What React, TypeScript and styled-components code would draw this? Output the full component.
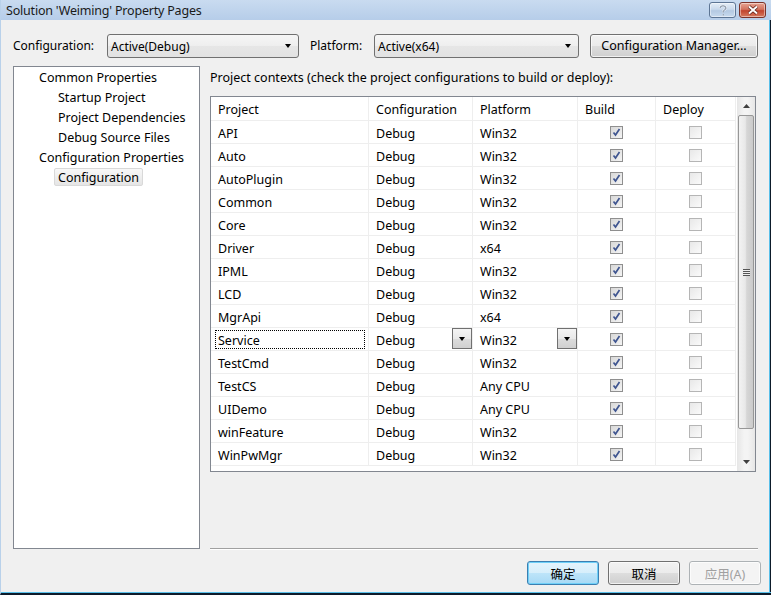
import React from "react";
import styled, { createGlobalStyle } from "styled-components";

const GlobalStyle = createGlobalStyle`
  html, body {
    margin: 0;
    padding: 0;
    background: #f0f0f0;
  }
  body {
    font-family: "Noto Sans", "Noto Sans CJK SC", sans-serif;
    font-size: 12px;
    color: #000;
  }
`;

const ROWS: [string, string, string][] = [
  ["API", "Debug", "Win32"],
  ["Auto", "Debug", "Win32"],
  ["AutoPlugin", "Debug", "Win32"],
  ["Common", "Debug", "Win32"],
  ["Core", "Debug", "Win32"],
  ["Driver", "Debug", "x64"],
  ["IPML", "Debug", "Win32"],
  ["LCD", "Debug", "Win32"],
  ["MgrApi", "Debug", "x64"],
  ["Service", "Debug", "Win32"],
  ["TestCmd", "Debug", "Win32"],
  ["TestCS", "Debug", "Any CPU"],
  ["UIDemo", "Debug", "Any CPU"],
  ["winFeature", "Debug", "Win32"],
  ["WinPwMgr", "Debug", "Win32"],
];

const TREE = [
  { label: "Common Properties", level: 0 },
  { label: "Startup Project", level: 1 },
  { label: "Project Dependencies", level: 1 },
  { label: "Debug Source Files", level: 1 },
  { label: "Configuration Properties", level: 0 },
  { label: "Configuration", level: 1, selected: true },
];

const COLS = "158px 104px 105px 78px 80px";

const Window = styled.div`
  width: 771px;
  height: 595px;
  box-sizing: border-box;
  display: flex;
  flex-direction: column;
  background: #f0f0f0;
  border-left: 1px solid #b9d1ea;
  border-bottom: 2px solid #0d1b2a;
  box-shadow: inset 0 -1px 0 #59c0ea, inset -1px 0 0 #0d1b2a, inset -2px 0 0 #59c0ea;
  overflow: hidden;
`;

const TitleBar = styled.div`
  height: 20px;
  flex: none;
  display: flex;
  align-items: center;
  padding: 0 5px 0 5px;
  background: linear-gradient(#c9dbf0, #b6cde9);
`;

const Title = styled.div`
  flex: 1;
  font-size: 12.5px;
  color: #1a1a1a;
  letter-spacing: -0.2px;
`;

const CaptionButton = styled.div<{ $close?: boolean }>`
  width: 27px;
  height: 16px;
  margin-left: 3px;
  box-sizing: border-box;
  border: 1px solid ${(p) => (p.$close ? "#7b3229" : "#5d7594")};
  border-radius: 3px;
  display: flex;
  align-items: center;
  justify-content: center;
  background: ${(p) =>
    p.$close
      ? "linear-gradient(#e8a493 0%, #d2735f 45%, #c1442e 55%, #d67a5f 100%)"
      : "linear-gradient(#e4edf7 0%, #c9d9ec 45%, #b4c9e2 55%, #c8daee 100%)"};
  box-shadow: inset 0 0 0 1px rgba(255, 255, 255, 0.45);
`;

const Client = styled.div`
  flex: 1;
  display: flex;
  flex-direction: column;
  padding: 13px 12px 0 12px;
  min-height: 0;
`;

const ConfigRow = styled.div`
  display: flex;
  align-items: center;
  height: 25px;
`;

const Label = styled.span<{ $w: number }>`
  width: ${(p) => p.$w}px;
  flex: none;
`;

const Combo = styled.div<{ $w: number }>`
  width: ${(p) => p.$w}px;
  height: 24px;
  flex: none;
  box-sizing: border-box;
  border: 1px solid #707070;
  border-radius: 3px;
  background: linear-gradient(#f6f6f6 0%, #eeeeee 50%, #e6e6e6 51%, #e2e2e2 100%);
  display: flex;
  align-items: center;
  padding: 0 7px 0 3px;
  margin-top: 1px;
`;

const ComboText = styled.span`
  flex: 1;
`;

const Arrow = styled.span`
  width: 0;
  height: 0;
  border-left: 3.5px solid transparent;
  border-right: 3.5px solid transparent;
  border-top: 4px solid #000;
`;

const Button = styled.div<{ $w: number; $default?: boolean; $disabled?: boolean }>`
  width: ${(p) => p.$w}px;
  height: 24px;
  flex: none;
  box-sizing: border-box;
  border: 1px solid
    ${(p) => (p.$default ? "#3c7fb1" : p.$disabled ? "#adb2b5" : "#707070")};
  border-radius: 3px;
  display: flex;
  align-items: center;
  justify-content: center;
  font-size: 12.5px;
  color: ${(p) => (p.$disabled ? "#a0a0a0" : "#000")};
  background: ${(p) =>
    p.$default
      ? "linear-gradient(#e5f4fc 0%, #d6eefb 50%, #bde4f9 51%, #a7d9f5 100%)"
      : p.$disabled
        ? "#f4f4f4"
        : "linear-gradient(#f2f2f2 0%, #ebebeb 50%, #dddddd 51%, #cfcfcf 100%)"};
  box-shadow: ${(p) =>
    p.$default ? "inset 0 0 0 1px #6fd0f8" : "inset 0 0 0 1px rgba(255,255,255,0.7)"};
`;

const Body = styled.div`
  flex: none;
  display: flex;
  margin-top: 8px;
  gap: 10px;
`;

const TreePanel = styled.div`
  width: 187px;
  height: 483px;
  flex: none;
  box-sizing: border-box;
  border: 1px solid #828790;
  background: #fff;
`;

const TreeItem = styled.div<{ $level: number; $selected?: boolean }>`
  height: 20px;
  display: flex;
  align-items: center;
  padding-left: ${(p) => (p.$level ? 44 : 25)}px;
  font-size: 12.5px;
  span {
    padding: 0 3px;
    height: 18px;
    line-height: 17px;
    margin-left: -4px;
    box-sizing: border-box;
    border: 1px solid ${(p) => (p.$selected ? "#d9d9d9" : "transparent")};
    border-radius: 2px;
    background: ${(p) =>
      p.$selected ? "linear-gradient(#f8f8f8, #e5e5e5)" : "transparent"};
  }
`;

const RightCol = styled.div`
  flex: 1;
  display: flex;
  flex-direction: column;
  height: 484px;
`;

const Caption = styled.div`
  height: 24px;
  line-height: 24px;
  margin-bottom: 6px;
  font-size: 12.5px;
`;

const GridBox = styled.div`
  width: 546px;
  height: 376px;
  box-sizing: border-box;
  border: 1px solid #828790;
  background: #fff;
  display: flex;
`;

const Table = styled.div`
  flex: none;
  display: flex;
  flex-direction: column;
`;

const Row = styled.div<{ $header?: boolean }>`
  display: grid;
  grid-template-columns: ${COLS};
  height: ${(p) => (p.$header ? 24 : 23)}px;
`;

const Cell = styled.div<{ $center?: boolean; $header?: boolean }>`
  position: relative;
  box-sizing: border-box;
  border-right: 1px solid #eeeeee;
  border-bottom: 1px solid #eeeeee;
  display: flex;
  align-items: center;
  justify-content: ${(p) => (p.$center ? "center" : "flex-start")};
  padding-left: ${(p) => (p.$center ? 0 : 7)}px;
  padding-top: ${(p) => (p.$header ? 1 : 2)}px;
  font-size: 12.5px;
  white-space: nowrap;
`;

const FocusBox = styled.span`
  position: absolute;
  left: 4px;
  top: 2px;
  right: 3px;
  bottom: 1px;
  border: 1px dotted #000;
  pointer-events: none;
`;

const DropButton = styled.span`
  position: absolute;
  right: 0;
  top: 0;
  width: 20px;
  height: 21px;
  box-sizing: border-box;
  border: 1px solid #707070;
  background: linear-gradient(#f4f4f4 0%, #e9e9e9 50%, #dcdcdc 51%, #d0d0d0 100%);
  display: flex;
  align-items: center;
  justify-content: center;
`;

const Check = styled.span<{ $checked?: boolean }>`
  width: 13px;
  height: 13px;
  margin-top: -1px;
  box-sizing: border-box;
  border: 1px solid ${(p) => (p.$checked ? "#8f8f8f" : "#b5b5b5")};
  background: ${(p) =>
    p.$checked
      ? "linear-gradient(135deg, #d8d8d8, #f4f4f4)"
      : "linear-gradient(135deg, #e8e8e8, #fafafa)"};
  display: flex;
  align-items: center;
  justify-content: center;
`;

const ScrollBar = styled.div`
  width: 18px;
  flex: none;
  margin-left: 1px;
  display: flex;
  flex-direction: column;
  background: linear-gradient(90deg, #e6e6e6, #f4f4f4 40%, #f4f4f4 60%, #e6e6e6);
`;

const ScrollArrow = styled.div`
  height: 18px;
  flex: none;
  display: flex;
  align-items: center;
  justify-content: center;
`;

const Thumb = styled.div`
  height: 314px;
  margin: 0 1px;
  box-sizing: border-box;
  border: 1px solid #979797;
  border-radius: 2px;
  background: linear-gradient(90deg, #f3f3f3, #e8e8e8 45%, #d6d6d6 55%, #cbcbcb);
  display: flex;
  align-items: center;
  justify-content: center;
`;

const Grip = styled.span`
  width: 7px;
  height: 7px;
  background: repeating-linear-gradient(
    #555 0,
    #555 1px,
    #eee 1px,
    #eee 2px
  );
`;

const Spacer = styled.div`
  flex: 1;
`;

const Separator = styled.div`
  height: 1px;
  width: 548px;
  background: #a0a0a0;
  border-bottom: 1px solid #fff;
`;

const Footer = styled.div`
  display: flex;
  justify-content: flex-end;
  gap: 9px;
  padding: 11px 0 0 0;
  margin-right: -2px;
`;

const CheckMark = () => (
  <svg width="9" height="9" viewBox="0 0 9 9">
    <path d="M1.5 4.5 L3.5 7 L7.5 1" fill="none" stroke="#3f5590" strokeWidth="1.7" />
  </svg>
);

const UpArrow = ({ down }: { down?: boolean }) => (
  <svg width="7" height="4" viewBox="0 0 7 4">
    <path d={down ? "M0 0 L7 0 L3.5 4 Z" : "M0 4 L7 4 L3.5 0 Z"} fill="#404040" />
  </svg>
);

const App = () => {
  return (
    <>
      <GlobalStyle />
      <Window>
        <TitleBar>
          <Title>Solution 'Weiming' Property Pages</Title>
          <CaptionButton>
            <svg width="8" height="11" viewBox="0 0 8 11">
              <path
                d="M1 3 Q1 0.8 4 0.8 Q7 0.8 7 3 Q7 4.6 4.8 5.4 L4.2 6 L4.2 7.5 M4.2 9 L4.2 10.5"
                fill="none"
                stroke="#fff"
                strokeWidth="1.7"
              />
              <path
                d="M1 3 Q1 0.8 4 0.8 Q7 0.8 7 3 Q7 4.6 4.8 5.4 L4.2 6 L4.2 7.5 M4.2 9 L4.2 10.5"
                fill="none"
                stroke="#4a5f7b"
                strokeWidth="0.8"
              />
            </svg>
          </CaptionButton>
          <CaptionButton $close>
            <svg width="12" height="10" viewBox="0 0 12 10">
              <path d="M2 1.5 L10 8.5 M10 1.5 L2 8.5" stroke="#5a1d14" strokeWidth="3.4" />
              <path d="M2 1.5 L10 8.5 M10 1.5 L2 8.5" stroke="#fff" strokeWidth="2" />
            </svg>
          </CaptionButton>
        </TitleBar>
        <Client>
          <ConfigRow>
            <Label $w={94}>Configuration:</Label>
            <Combo $w={192}>
              <ComboText>Active(Debug)</ComboText>
              <Arrow />
            </Combo>
            <Label $w={11} />
            <Label $w={64}>Platform:</Label>
            <Combo $w={205}>
              <ComboText>Active(x64)</ComboText>
              <Arrow />
            </Combo>
            <Label $w={11} />
            <Button $w={168}>Configuration Manager...</Button>
          </ConfigRow>
          <Body>
            <TreePanel>
              {TREE.map((item) => (
                <TreeItem key={item.label} $level={item.level} $selected={item.selected}>
                  <span>{item.label}</span>
                </TreeItem>
              ))}
            </TreePanel>
            <RightCol>
              <Caption>
                Project contexts (check the project configurations to build or deploy):
              </Caption>
              <GridBox>
                <Table>
                  <Row $header>
                    <Cell $header>Project</Cell>
                    <Cell $header>Configuration</Cell>
                    <Cell $header>Platform</Cell>
                    <Cell $header>Build</Cell>
                    <Cell $header>Deploy</Cell>
                  </Row>
                  {ROWS.map(([name, conf, plat]) => {
                    const active = name === "Service";
                    return (
                      <Row key={name}>
                        <Cell>
                          {name}
                          {active && <FocusBox />}
                        </Cell>
                        <Cell>
                          {conf}
                          {active && (
                            <DropButton>
                              <Arrow />
                            </DropButton>
                          )}
                        </Cell>
                        <Cell>
                          {plat}
                          {active && (
                            <DropButton>
                              <Arrow />
                            </DropButton>
                          )}
                        </Cell>
                        <Cell $center>
                          <Check $checked>
                            <CheckMark />
                          </Check>
                        </Cell>
                        <Cell $center>
                          <Check />
                        </Cell>
                      </Row>
                    );
                  })}
                </Table>
                <ScrollBar>
                  <ScrollArrow>
                    <UpArrow />
                  </ScrollArrow>
                  <Thumb>
                    <Grip />
                  </Thumb>
                  <Spacer />
                  <ScrollArrow>
                    <UpArrow down />
                  </ScrollArrow>
                </ScrollBar>
              </GridBox>
              <Spacer />
              <Separator />
            </RightCol>
          </Body>
          <Footer>
            <Button $w={72} $default>
              确定
            </Button>
            <Button $w={72}>取消</Button>
            <Button $w={72} $disabled>
              应用(A)
            </Button>
          </Footer>
        </Client>
      </Window>
    </>
  );
};

export default App;
